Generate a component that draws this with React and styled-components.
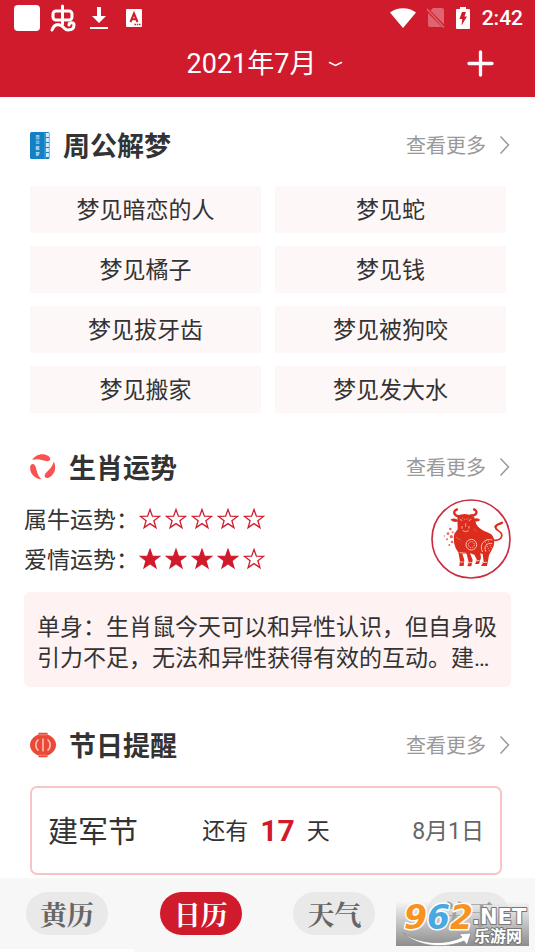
import React from 'react';
import styled, { createGlobalStyle } from 'styled-components';

const latinFirst = "Roboto, 'Noto Sans CJK SC', sans-serif";

const GlobalStyle = createGlobalStyle`
  * {
    box-sizing: border-box;
  }

  body {
    margin: 0;
    background: #fff;
    color: #333;
    font-family: 'Noto Sans CJK SC', sans-serif;
  }

  button {
    border: 0;
    padding: 0;
    background: none;
    color: inherit;
    font: inherit;
    cursor: pointer;
  }

  a {
    color: inherit;
    text-decoration: none;
  }

  svg {
    display: block;
    flex: none;
  }

  h1, h2, p, dl, dd {
    margin: 0;
  }
`;

const Page = styled.div`
  min-height: 100vh;
  display: flex;
  flex-direction: column;
`;

const Header = styled.header`
  background: #d01b2d;
  color: #fff;
  padding-bottom: 7px;
`;

const StatusBar = styled.div`
  height: 36px;
  padding: 0 12px 0 14px;
  display: flex;
  align-items: center;
  justify-content: space-between;
`;

const StatusGroup = styled.div`
  display: flex;
  align-items: center;
  gap: ${({ $gap }) => $gap}px;
`;

const Clock = styled.span`
  font-family: ${latinFirst};
  font-size: 21px;
  line-height: 24px;
  font-weight: 500;
`;

const TitleBar = styled.div`
  height: 54px;
  padding: 0 41px 0 36px;
  display: grid;
  grid-template-columns: 1fr auto 1fr;
  align-items: center;
`;

const MonthButton = styled.button`
  grid-column: 2;
  display: flex;
  align-items: center;
  gap: 12px;
`;

const Month = styled.h1`
  padding-top: 2px;
  font-family: ${latinFirst};
  font-size: 27px;
  line-height: 36px;
  font-weight: 400;
`;

const AddButton = styled.button`
  justify-self: end;
`;

const Main = styled.main`
  flex: 1;
  padding: 28px 0 2px;
`;

const Section = styled.section`
  margin-bottom: ${({ $space }) => $space || 0}px;
`;

const SectionHead = styled.div`
  height: 40px;
  padding: 0 25px 0 29px;
  display: flex;
  align-items: center;
  gap: 13px;
`;

const SectionTitle = styled.h2`
  flex: 1;
  font-size: 27px;
  line-height: 40px;
  font-weight: 700;
`;

const MoreLink = styled.a`
  display: flex;
  align-items: center;
  gap: 13px;
  color: #999;
  font-size: 20px;
  line-height: 30px;
`;

const DreamGrid = styled.div`
  display: grid;
  grid-template-columns: 1fr 1fr;
  gap: 13px 14px;
  padding: 21px 29px 0 30px;
`;

const DreamLink = styled.a`
  height: 47px;
  padding-bottom: 3px;
  display: flex;
  align-items: center;
  justify-content: center;
  background: #fef7f7;
  font-size: 23px;
  line-height: 34px;
`;

const Fortune = styled.div`
  display: flex;
  align-items: center;
  justify-content: space-between;
  padding: 12px 24px 0;
`;

const RatingRow = styled.div`
  height: 40px;
  display: flex;
  align-items: center;
  font-size: 23px;
  line-height: 34px;
`;

const RatingLabel = styled.dt`
  padding-bottom: 3px;
`;

const Stars = styled.dd`
  display: flex;
  gap: 4px;
`;

const FortuneText = styled.p`
  margin: 13px 24px 0;
  padding: 20px 13px 13px;
  border-radius: 6px;
  background: #fef2f3;
  font-family: ${latinFirst};
  font-size: 23px;
  line-height: 31px;
`;

const FestivalCard = styled.div`
  height: 89px;
  margin: 21px 33px 0 30px;
  padding: 0 16px;
  display: grid;
  grid-template-columns: 1fr auto 1fr;
  align-items: center;
  border: 2px solid #f8c4c5;
  border-radius: 7px;
  font-size: 23px;
  line-height: 34px;
`;

const FestivalName = styled.span`
  padding-bottom: 3px;
  font-size: 30px;
  line-height: 44px;
`;

const Countdown = styled.span`
  padding-bottom: 3px;
  display: flex;
  align-items: center;
  gap: 12px;
`;

const Days = styled.strong`
  padding-top: 3px;
  color: #d01b2d;
  font-family: ${latinFirst};
  font-size: 30px;
  font-weight: 700;
`;

const FestivalDate = styled.span`
  justify-self: end;
  padding-top: 3px;
  color: #666;
  font-family: ${latinFirst};
`;

const TabBar = styled.nav`
  position: relative;
  background: #f7f7f7;
`;

const Tabs = styled.div`
  height: 71px;
  padding-bottom: 1px;
  display: grid;
  grid-template-columns: repeat(4, 1fr);
  align-items: center;
  justify-items: center;
`;

const Tab = styled.button`
  width: 82px;
  height: 43px;
  border-radius: 22px;
  background: ${({ $active }) => ($active ? '#d01b2d' : '#e9e9e9')};
  color: ${({ $active }) => ($active ? '#fff' : '#666')};
  font-family: 'Noto Serif CJK SC', 'Noto Serif SC', 'Noto Sans CJK SC', serif;
  font-size: 27px;
  line-height: 43px;
  font-weight: 700;
`;

const TabTrack = styled.div`
  width: 25%;
  height: 3px;
  background: #fff;
`;

const Watermark = styled.div`
  position: absolute;
  right: 6px;
  bottom: 6px;
  background: linear-gradient(rgba(240, 240, 240, 0.4), rgba(180, 180, 180, 0.8) 50%, rgba(135, 135, 135, 0.95));
`;

const dreams = [
  '梦见暗恋的人', '梦见蛇',
  '梦见橘子', '梦见钱',
  '梦见拔牙齿', '梦见被狗咬',
  '梦见搬家', '梦见发大水',
];

const ratings = [
  { label: '属牛运势：', score: 0 },
  { label: '爱情运势：', score: 4 },
];

const tabs = ['黄历', '日历', '天气', '关于'];

const BugIcon = () => (
  <svg width="26" height="28" viewBox="0 0 26 28" fill="none" stroke="#fff" strokeWidth="3" strokeLinecap="round" strokeLinejoin="round">
    <rect x="3" y="7" width="19" height="9" rx="3" />
    <path d="M12.500 2v18" />
    <path d="M2 26C4 21 7 20 10 21C14 22 14 26 18 26C22 26 24 24 24 21C24 18 19 18 19 21" />
  </svg>
);

const DownloadIcon = () => (
  <svg width="18" height="24" viewBox="0 0 18 24" fill="#fff">
    <path d="M7 1h4v9h5l-7 7-7-7h5zM0 21h18v2H0z" />
  </svg>
);

const LetterIcon = () => (
  <svg width="16" height="18" viewBox="0 0 16 18">
    <rect width="16" height="18" rx="1" fill="#fff" />
    <path d="M4.500 13L8 4.500L11.500 13M5.700 10.300h4.600" fill="none" stroke="#d01b2d" strokeWidth="2" />
    <path d="M8.500 15.500h6" stroke="#d01b2d" strokeWidth="1.300" strokeDasharray="1.500 .8" />
  </svg>
);

const WifiIcon = () => (
  <svg width="26" height="20" viewBox="0 0 26 20" fill="#fff">
    <path d="M0 4.500C7-1.300 19-1.300 26 4.500L13 20z" />
  </svg>
);

const NoSimIcon = () => (
  <svg width="20" height="22" viewBox="0 0 20 22">
    <path d="M7 1h9q2 0 2 2v14.500L4.500 3.500zM2 6l14 14H4q-2 0-2-2z" fill="#e0646f" />
    <path d="M1 2l17 18.500" stroke="#e0646f" strokeWidth="1.500" />
  </svg>
);

const BatteryIcon = () => (
  <svg width="14" height="22" viewBox="0 0 14 22">
    <path d="M4 0h6v2h3q1 0 1 1v18q0 1-1 1H1q-1 0-1-1V3q0-1 1-1h3z" fill="#fff" />
    <path d="M6 5h4L8.500 9.500H11L5.500 18.500L6.300 12H3.500z" fill="#d01b2d" />
  </svg>
);

const ChevronDown = () => (
  <svg width="15" height="7" viewBox="0 0 15 7" fill="none" stroke="#fff" strokeWidth="1.500" strokeLinecap="round">
    <path d="M1.500 2.500L7.500 5.500L13.500 2.500" />
  </svg>
);

const PlusIcon = () => (
  <svg width="27" height="27" viewBox="0 0 27 27" stroke="#fff" strokeWidth="3.300" strokeLinecap="round">
    <path d="M13.500 2v23M2 13.500h23" />
  </svg>
);

const ChevronRight = () => (
  <svg width="11" height="20" viewBox="0 0 11 20" fill="none" stroke="#999" strokeWidth="1.500">
    <path d="M1.500 1.500L9.500 10L1.500 18.500" />
  </svg>
);

const DreamIcon = () => (
  <svg width="21" height="27" viewBox="0 0 21 27">
    <rect x="1" width="19.500" height="27" rx="1.500" fill="#1480c4" />
    <path d="M18.400 1v25" stroke="#d5edfa" strokeWidth="3" strokeDasharray="4 1" />
    <path d="M16 0v27" stroke="#54b1e4" strokeWidth=".8" />
    <text fill="#c9e7f8" fontSize="4" fontWeight="700" textAnchor="middle">
      <tspan x="8.500" y="6.500">周</tspan>
      <tspan x="8.500" y="12.200">公</tspan>
      <tspan x="8.500" y="17.900">解</tspan>
      <tspan x="8.500" y="23.600">梦</tspan>
    </text>
  </svg>
);

const petal = 'M5.500 3.500C10-1 18-.8 22 4C24.500 7 22.500 9.500 19.500 8.600C16 7.500 12.500 3.500 5.500 3.500z';

const ZodiacIcon = () => (
  <svg width="27" height="26" viewBox="0 0 27 26" fill="#fa5250">
    <path d={petal} transform="rotate(-15 13.500 13)" />
    <path d={petal} transform="rotate(105 13.500 13)" />
    <path d={petal} transform="rotate(225 13.500 13)" />
  </svg>
);

const LanternIcon = () => (
  <svg width="27" height="26" viewBox="0 0 27 26">
    <path d="M9.500 .8h9v3h-9zM9.500 22.200h9v3h-9z" fill="#ea4938" />
    <ellipse cx="14" cy="13" rx="13" ry="11" fill="#ea4938" />
    <path d="M10 2.800h8M10 23.200h8" stroke="#f79c8c" strokeWidth=".8" />
    <path d="M14 6.500v13M9.500 7.500C6 10 6 16 9.500 18.500M18.500 7.500C22 10 22 16 18.500 18.500" fill="none" stroke="#ffc4b8" strokeWidth="1.500" />
  </svg>
);

const Star = ({ filled }) => (
  <svg width="22" height="22" viewBox="0 0 22 22" fill={filled ? '#d01b2d' : 'none'} stroke="#d01b2d" strokeWidth="1.300">
    <path d="M11 1.500L13.400 8.200L20.500 8.400L14.900 12.700L16.900 19.600L11 15.600L5.100 19.600L7.100 12.700L1.500 8.400L8.600 8.200z" />
  </svg>
);

const OxBadge = () => (
  <svg width="80" height="80" viewBox="18 15 240 240" role="img" aria-label="牛">
    <circle cx="138" cy="135" r="117" fill="#fff" stroke="#c92c43" strokeWidth="5" />
    <g fill="none" stroke="#dc2c1d" strokeLinecap="round">
      <path d="M105 66C88 68 81 52 96 46" strokeWidth="7" />
      <path d="M137 64C155 66 160 51 147 46" strokeWidth="7" />
      <path d="M198 134C216 146 235 133 229 118C222 107 207 108 213 96" strokeWidth="5" />
      <path d="M211 98C214 91 223 91 231 86" strokeWidth="7" />
    </g>
    <g fill="#dc2c1d">
      <path d="M76 77Q88 68 101 80Q91 89 76 77zM144 76Q157 68 166 78Q155 86 144 80z" />
      <path d="M97 66Q121 53 147 68L154 91C164 108 181 112 198 120C210 130 211 152 201 166L192 184L186 216H168L176 203L173 180L166 178L168 191L162 210H150L156 198L148 182L135 178L143 198L139 217H127L131 205L125 180L112 179L118 198L116 216H103L105 202L100 175C88 159 84 140 88 119L98 106z" />
    </g>
    <g fill="#dc2c1d" opacity="0.7">
      <circle cx="76" cy="105" r="4" /><circle cx="69" cy="119" r="4" />
      <circle cx="79" cy="128" r="5" /><circle cx="66" cy="136" r="3" />
      <circle cx="81" cy="144" r="4" /><circle cx="73" cy="153" r="3" />
      <circle cx="83" cy="115" r="3" /><circle cx="58" cy="126" r="2" />
    </g>
    <g fill="none" stroke="#f9c2b5" strokeWidth="3">
      <circle cx="139" cy="152" r="16" />
      <circle cx="139" cy="152" r="9" strokeDasharray="4 3" />
      <path d="M202 138C180 130 160 153 173 174M202 149C186 145 174 158 183 173" strokeWidth="3" />
      <path d="M181 143L194 173M190 140L199 162" strokeDasharray="3 4" />
      <path d="M104 76l8 4M139 76l-8 4M111 96v8M122 88v11M132 96v8M113 110q9 6 18 0" strokeWidth="2.500" />
      <path d="M104 176l20 2M103 204h13M127 206h14M151 200h13M170 205h16" strokeWidth="3" />
      <path d="M111 72q10 8 21 0M148 106l7 8M94 130l12 8" strokeDasharray="3 3" strokeWidth="2" />
    </g>
  </svg>
);

const LogoSvg = styled.svg`
  overflow: visible;
`;

const SiteLogo = () => (
  <LogoSvg width="133" height="44" viewBox="0 0 133 44">
    <g stroke="#fff" strokeWidth="3" strokeLinejoin="round" paintOrder="stroke">
      <text x="8" y="27" fontFamily="DejaVu Sans" fontWeight="700" fontStyle="italic" fontSize="33">
        <tspan fill="#f7931e">9</tspan><tspan fill="#4aa8e0">6</tspan><tspan fill="#f7931e">2</tspan>
      </text>
    </g>
    <path d="M7 31C25 43 51 43 66 35L63 32L75 31L71 43L68 39C49 47 22 45 7 31z" fill="#fff" stroke="#888" strokeWidth=".7" />
    <g fill="#fff" stroke="#777" strokeWidth="2" strokeLinejoin="round" paintOrder="stroke" fontWeight="700">
      <text x="76" y="22" fontFamily="DejaVu Sans" fontSize="21">.NET</text>
      <text x="78" y="40" fontSize="16">乐游网</text>
    </g>
  </LogoSvg>
);

const Heading = ({ icon, children }) => (
  <SectionHead>
    {icon}
    <SectionTitle>{children}</SectionTitle>
    <MoreLink href='#more'>
      查看更多
      <ChevronRight />
    </MoreLink>
  </SectionHead>
);

const App = () => (
  <Page>
    <GlobalStyle />
    <Header>
      <StatusBar>
        <StatusGroup $gap={18}>
          <StatusGroup $gap={14}>
            <StatusGroup $gap={10}>
              <svg width="26" height="26"><rect width="26" height="26" rx="4" fill="#fff" /></svg>
              <BugIcon />
            </StatusGroup>
            <DownloadIcon />
          </StatusGroup>
          <LetterIcon />
        </StatusGroup>
        <StatusGroup $gap={10}>
          <WifiIcon />
          <NoSimIcon />
          <StatusGroup $gap={12}>
            <BatteryIcon />
            <Clock>2:42</Clock>
          </StatusGroup>
        </StatusGroup>
      </StatusBar>
      <TitleBar>
        <MonthButton>
          <Month>2021年7月</Month>
          <ChevronDown />
        </MonthButton>
        <AddButton aria-label='添加'>
          <PlusIcon />
        </AddButton>
      </TitleBar>
    </Header>

    <Main>
      <Section $space={34}>
        <Heading icon={<DreamIcon />}>周公解梦</Heading>
        <DreamGrid>
          {dreams.map(dream => (
            <DreamLink key={dream} href='#dream'>{dream}</DreamLink>
          ))}
        </DreamGrid>
      </Section>

      <Section $space={38}>
        <Heading icon={<ZodiacIcon />}>生肖运势</Heading>
        <Fortune>
          <dl>
            {ratings.map(({ label, score }) => (
              <RatingRow key={label}>
                <RatingLabel>{label}</RatingLabel>
                <Stars aria-label={`${score}/5`}>
                  {[0, 1, 2, 3, 4].map(i => <Star key={i} filled={i < score} />)}
                </Stars>
              </RatingRow>
            ))}
          </dl>
          <OxBadge />
        </Fortune>
        <FortuneText>
          单身：生肖鼠今天可以和异性认识，但自身吸引力不足，无法和异性获得有效的互动。建…
        </FortuneText>
      </Section>

      <Section>
        <Heading icon={<LanternIcon />}>节日提醒</Heading>
        <FestivalCard>
          <FestivalName>建军节</FestivalName>
          <Countdown>
            还有
            <Days>17</Days>
            天
          </Countdown>
          <FestivalDate>8月1日</FestivalDate>
        </FestivalCard>
      </Section>
    </Main>

    <TabBar>
      <Tabs>
        {tabs.map(tab => (
          <Tab key={tab} $active={tab === '日历'}>{tab}</Tab>
        ))}
      </Tabs>
      <TabTrack />
      <Watermark>
        <SiteLogo />
      </Watermark>
    </TabBar>
  </Page>
);

export default App;
